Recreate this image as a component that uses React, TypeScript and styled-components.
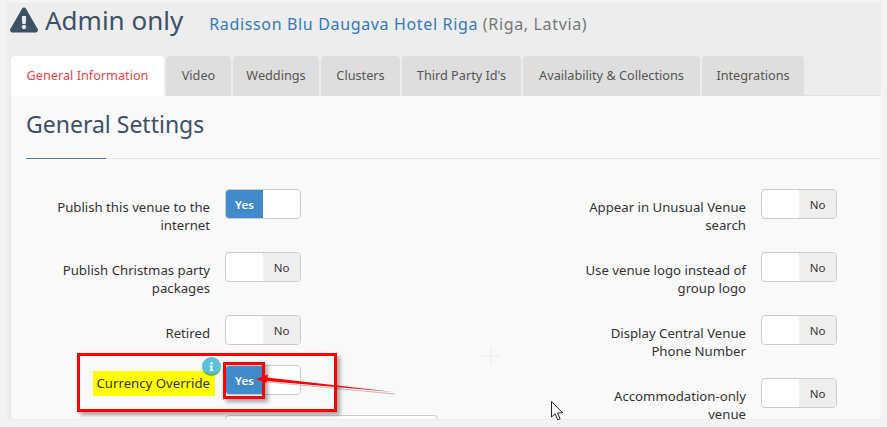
import styled, { createGlobalStyle } from 'styled-components';
import { FaExclamationTriangle, FaInfo } from 'react-icons/fa';

const GlobalStyle = createGlobalStyle`
  html, body {
    margin: 0;
    padding: 0;
    background: #f3f3f3;
    overflow: hidden;
  }
  body {
    font-family: "Noto Sans", "Open Sans", sans-serif;
    font-size: 13px;
    color: #333;
  }
`;

const Page = styled.div`
  position: relative;
  width: 887px;
  height: 427px;
  box-sizing: border-box;
  padding: 3px 6px 7px 7px;
  overflow: hidden;
`;

const Main = styled.div`
  height: 417px;
  background: #ededed;
  padding-left: 3px;
  overflow: hidden;
`;

const Header = styled.div`
  display: flex;
  align-items: center;
  height: 53px;
  padding-bottom: 20px;
  box-sizing: border-box;
`;

const AdminTitle = styled.h1`
  display: flex;
  align-items: center;
  gap: 7px;
  margin: 0;
  font-size: 26px;
  line-height: 30px;
  font-weight: 400;
  color: #3d5166;
`;

const VenueLine = styled.div`
  margin-left: 26px;
  padding-top: 8px;
  font-size: 16px;
  letter-spacing: 0.65px;
  color: #777;
`;

const VenueLink = styled.a`
  color: #337ab7;
  text-decoration: none;
`;

const TabBar = styled.div`
  display: flex;
  gap: 2px;
  height: 40px;
  padding-left: 1px;
`;

const Tab = styled.div<{ $active?: boolean; $width: number }>`
  width: ${(p) => p.$width}px;
  display: flex;
  align-items: center;
  justify-content: center;
  padding-bottom: 2px;
  box-sizing: border-box;
  white-space: nowrap;
  border-radius: 4px 4px 0 0;
  background: ${(p) => (p.$active ? '#fff' : '#dedede')};
  color: ${(p) => (p.$active ? '#e4474b' : '#555')};
  font-size: 12.7px;
`;

const Panel = styled.div`
  height: 324px;
  background: #f9f9f9;
  border-left: 1px solid #e4e4e4;
  border-top: 1px solid #e2e2e2;
  margin-top: -1px;
  box-sizing: border-box;
  overflow: hidden;
`;

const SectionHead = styled.div`
  position: relative;
  margin-left: 15px;
  height: 62px;
  border-bottom: 1px solid #e7e7e7;
`;

const SectionTitle = styled.h2`
  margin: 0;
  padding-top: 12px;
  font-size: 23px;
  line-height: 32px;
  font-weight: 400;
  color: #3d5166;
`;

const Accent = styled.div`
  position: absolute;
  left: 0;
  bottom: -1px;
  width: 80px;
  height: 1px;
  background: #4a7cb0;
`;

const Columns = styled.div`
  display: grid;
  grid-template-columns: 536px 1fr;
  padding: 30px 0 0 15px;
`;

const Column = styled.div`
  display: flex;
  flex-direction: column;
`;

const Row = styled.div<{ $height?: number }>`
  display: flex;
  align-items: flex-start;
  height: ${(p) => p.$height ?? 63}px;
  gap: 15px;
`;

const Label = styled.div`
  width: 184px;
  padding: 9px 0 0 20px;
  box-sizing: border-box;
  text-align: right;
  font-size: 13.2px;
  line-height: 18px;
  color: #333;
`;

const Highlight = styled.span`
  display: inline-block;
  background: #ffff00;
  padding: 3px 5px 4px 4px;
  margin: -3px -5px 0 0;
  white-space: nowrap;
`;

const Switch = styled.div`
  display: flex;
  flex: none;
  width: 76px;
  height: 30px;
  box-sizing: border-box;
  border: 1px solid #ccc;
  border-radius: 4px;
  background: #fff;
  overflow: hidden;
  font-size: 11.5px;
`;

const SwitchSide = styled.div<{ $on?: boolean }>`
  width: 37px;
  display: flex;
  align-items: center;
  justify-content: center;
  background: ${(p) => (p.$on ? '#428bca' : '#eeeeee')};
  color: ${(p) => (p.$on ? '#fff' : '#333')};
  font-weight: ${(p) => (p.$on ? 600 : 400)};
`;

const SwitchBlank = styled.div`
  flex: 1;
`;

const PartialInput = styled.div`
  margin-left: 199px;
  width: 213px;
  height: 30px;
  box-sizing: border-box;
  border: 1px solid #ccc;
  border-radius: 4px;
  background: #fff;
`;

const RedBox = styled.div`
  position: absolute;
  box-sizing: border-box;
  border: 3px solid #f00;
  box-shadow: 3px 3px 4px rgba(0, 0, 0, 0.35);
`;

const OuterBox = styled(RedBox)`
  left: 77px;
  top: 353px;
  width: 260px;
  height: 59px;
`;

const InnerBox = styled(RedBox)`
  left: 223px;
  top: 362px;
  width: 42px;
  height: 37px;
`;

const InfoBadge = styled.div`
  position: absolute;
  left: 202px;
  top: 357px;
  width: 19px;
  height: 16px;
  padding-top: 1px;
  border-radius: 50%;
  background: #5bc0de;
  border-bottom: 2px solid #6ab04c;
  color: #fff;
  font-size: 9px;
  display: flex;
  align-items: center;
  justify-content: center;
`;

const Overlay = styled.svg`
  position: absolute;
  left: 0;
  top: 0;
  pointer-events: none;
`;

const YesNo = ({ on }: { on?: boolean }) => (
  <Switch>
    {on ? (
      <>
        <SwitchSide $on>Yes</SwitchSide>
        <SwitchBlank />
      </>
    ) : (
      <>
        <SwitchBlank />
        <SwitchSide>No</SwitchSide>
      </>
    )}
  </Switch>
);

const tabs = [
  { name: 'General Information', width: 153, active: true },
  { name: 'Video', width: 65 },
  { name: 'Weddings', width: 86 },
  { name: 'Clusters', width: 79 },
  { name: "Third Party Id's", width: 119 },
  { name: 'Availability & Collections', width: 177 },
  { name: 'Integrations', width: 102 },
];

const rightRows = [
  'Appear in Unusual Venue search',
  'Use venue logo instead of group logo',
  'Display Central Venue Phone Number',
  'Accommodation-only venue',
];

export default function App() {
  return (
    <>
      <GlobalStyle />
      <Page>
        <Main>
          <Header>
            <AdminTitle>
              <FaExclamationTriangle size={28} />
              Admin only
            </AdminTitle>
            <VenueLine>
              <VenueLink>Radisson Blu Daugava Hotel Riga</VenueLink> (Riga, Latvia)
            </VenueLine>
          </Header>
          <TabBar>
            {tabs.map((t) => (
              <Tab key={t.name} $active={t.active} $width={t.width}>
                {t.name}
              </Tab>
            ))}
          </TabBar>
          <Panel>
            <SectionHead>
              <SectionTitle>General Settings</SectionTitle>
              <Accent />
            </SectionHead>
            <Columns>
              <Column>
                <Row>
                  <Label>Publish this venue to the internet</Label>
                  <YesNo on />
                </Row>
                <Row>
                  <Label>Publish Christmas party packages</Label>
                  <YesNo />
                </Row>
                <Row $height={50}>
                  <Label>Retired</Label>
                  <YesNo />
                </Row>
                <Row $height={50}>
                  <Label>
                    <Highlight>Currency Override</Highlight>
                  </Label>
                  <YesNo on />
                </Row>
                <PartialInput />
              </Column>
              <Column>
                {rightRows.map((text) => (
                  <Row key={text}>
                    <Label>{text}</Label>
                    <YesNo />
                  </Row>
                ))}
              </Column>
            </Columns>
          </Panel>
        </Main>
        <InfoBadge>
          <FaInfo />
        </InfoBadge>
        <OuterBox />
        <InnerBox />
        <Overlay width="887" height="427" viewBox="0 0 887 427">
          <path d="M491 347v18M482 356h18" stroke="#ececec" strokeWidth="1" fill="none" />
          <path d="M395 394L268 382" stroke="#000" strokeWidth="1.2" fill="none" opacity="0.25" />
          <path d="M394 392L267 377.5L266 381Z" fill="#f00" />
          <path d="M256 379L268 374.5L266.5 383Z" fill="#f00" />
          <path
            d="M551.5 401.5V417l3.6-3.2 2.6 6 2.4-1-2.6-5.8 5-.3Z"
            fill="#fff"
            stroke="#222"
            strokeWidth="1"
          />
        </Overlay>
      </Page>
    </>
  );
}
